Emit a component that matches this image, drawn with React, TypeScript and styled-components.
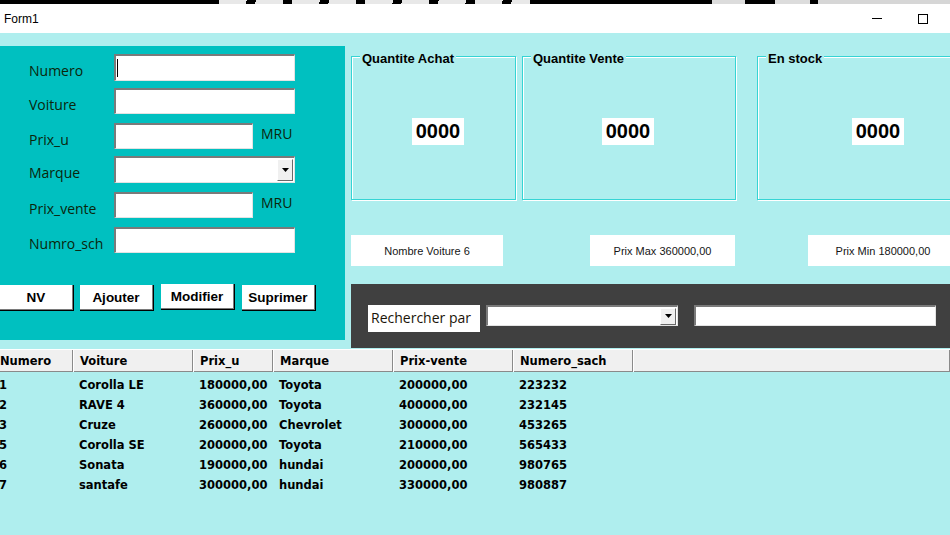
import React from "react";
import styled, { createGlobalStyle } from "styled-components";

const GlobalStyle = createGlobalStyle`
  html, body { margin: 0; padding: 0; background: #afeeee; overflow: hidden; }
  body { font-family: "Liberation Sans", Arial, sans-serif; }
  #root { width: 950px; height: 535px; overflow: hidden; }
`;

const Window = styled.div`
  width: 950px;
  height: 535px;
  display: flex;
  flex-direction: column;
  overflow: hidden;
  background: #afeeee;
`;

const DesktopStrip = styled.div`
  height: 4px;
  flex: none;
  background:
    linear-gradient(90deg, #000 0 215px, transparent 215px 530px, #000 530px 712px, #dcdcdc 712px 745px, #000 745px 775px, #dcdcdc 775px 810px, #000 810px 818px, #d6d6d6 818px),
    repeating-linear-gradient(100deg, #e8e8e8 0 27px, #000 27px 36px);
`;

const TitleBar = styled.div`
  height: 29px;
  flex: none;
  background: #fff;
  display: flex;
  align-items: center;
  padding: 0 4px;
  font-family: "Liberation Sans", Arial, sans-serif;
  font-size: 12px;
  color: #000;
`;

const Caption = styled.span`
  flex: 1;
`;

const CaptionButton = styled.div`
  width: 46px;
  height: 29px;
  display: flex;
  align-items: center;
  justify-content: center;
`;

const MinGlyph = styled.span`
  width: 10px;
  height: 1px;
  background: #000;
`;

const MaxGlyph = styled.span`
  width: 10px;
  height: 10px;
  box-sizing: border-box;
  border: 1px solid #000;
`;

const Client = styled.div`
  flex: 1;
  display: flex;
  flex-direction: column;
`;

const TopArea = styled.div`
  display: flex;
  align-items: flex-start;
  margin-top: 13px;
`;

const LeftPanel = styled.div`
  width: 345px;
  height: 294px;
  flex: none;
  box-sizing: border-box;
  background: #00c0c0;
  padding-top: 8px;
  display: flex;
  flex-direction: column;
`;

const FormRow = styled.div<{ $mt: number }>`
  display: flex;
  align-items: flex-start;
  height: 26px;
  margin-top: ${(p) => p.$mt}px;
`;

const FieldLabel = styled.div`
  width: 114px;
  flex: none;
  box-sizing: border-box;
  padding: 7px 0 0 29px;
  font-family: "Open Sans", "Noto Sans", sans-serif;
  font-size: 14px;
  line-height: 20px;
  color: #0b260b;
`;

const TextBox = styled.div<{ $w: number; $h?: number }>`
  width: ${(p) => p.$w}px;
  height: ${(p) => p.$h ?? 26}px;
  flex: none;
  box-sizing: border-box;
  background: #fff;
  border-style: solid;
  border-width: 2px 1px 1px 2px;
  border-color: #7a7a7a #e3e3e3 #e3e3e3 #7a7a7a;
  display: flex;
  align-items: center;
  justify-content: flex-end;
  position: relative;
`;

const Caret = styled.span`
  position: absolute;
  left: 1px;
  top: 3px;
  width: 1px;
  height: 18px;
  background: #000;
`;

const DropButton = styled.div<{ $h: number }>`
  width: 16px;
  height: ${(p) => p.$h}px;
  margin-right: 1px;
  box-sizing: border-box;
  background: #f0f0f0;
  border-style: solid;
  border-width: 1px;
  border-color: #fff #696969 #696969 #fff;
  display: flex;
  align-items: center;
  justify-content: center;
`;

const Unit = styled.div`
  margin-left: 8px;
  padding-top: 1px;
  font-family: "Open Sans", "Noto Sans", sans-serif;
  font-size: 14px;
  line-height: 20px;
  color: #0b260b;
`;

const ButtonRow = styled.div`
  display: flex;
  align-items: flex-start;
  margin-top: 31px;
`;

const ActionButton = styled.div<{ $ml: number; $up?: boolean }>`
  width: 74px;
  height: 26px;
  margin-left: ${(p) => p.$ml}px;
  margin-top: ${(p) => (p.$up ? 0 : 1)}px;
  box-sizing: border-box;
  background: #fff;
  box-shadow: inset -1px -1px 0 #000, inset -2px -2px 0 #7a7a7a;
  display: flex;
  align-items: center;
  justify-content: center;
  padding: 0 2px 1px 0;
  font-family: "Liberation Sans", Arial, sans-serif;
  font-weight: bold;
  font-size: 13.5px;
  color: #000;
`;

const RightColumn = styled.div`
  flex: 1;
  margin-left: 6px;
  padding-top: 10px;
  display: flex;
  flex-direction: column;
`;

const GroupRow = styled.div`
  display: flex;
  height: 144px;
`;

const GroupBox = styled.div<{ $w: number; $ml: number; $vx: number }>`
  position: relative;
  flex: none;
  width: ${(p) => p.$w}px;
  height: 144px;
  margin-left: ${(p) => p.$ml}px;
  box-sizing: border-box;
  border: 1px solid #35d4d4;
  box-shadow: 1px 1px 0 #ffffff, inset 1px 1px 0 #ffffff;
  padding: 61px 0 0 ${(p) => p.$vx}px;
`;

const GroupTitle = styled.div`
  position: absolute;
  top: -6px;
  left: 8px;
  padding: 0 2px;
  background: #afeeee;
  font-family: "Liberation Sans", Arial, sans-serif;
  font-weight: bold;
  font-size: 13px;
  line-height: 15px;
  color: #000;
`;

const ValueBox = styled.div`
  width: 52px;
  height: 27px;
  background: #fff;
  display: flex;
  align-items: center;
  justify-content: center;
  font-family: "Liberation Sans", Arial, sans-serif;
  font-weight: bold;
  font-size: 20px;
  color: #000;
`;

const InfoRow = styled.div`
  display: flex;
  height: 31px;
  margin-top: 35px;
`;

const InfoBox = styled.div<{ $w: number; $ml: number }>`
  flex: none;
  width: ${(p) => p.$w}px;
  margin-left: ${(p) => p.$ml}px;
  background: #fff;
  display: flex;
  align-items: center;
  justify-content: center;
  font-family: "Liberation Sans", Arial, sans-serif;
  font-size: 11px;
  color: #151515;
`;

const SearchPanel = styled.div`
  height: 64px;
  margin-top: 18px;
  box-sizing: border-box;
  background: #404040;
  display: flex;
  align-items: flex-start;
  padding: 21px 0 0 17px;
`;

const SearchLabel = styled.div`
  width: 112px;
  height: 27px;
  box-sizing: border-box;
  background: #fff;
  padding: 1px 0 0 3px;
  font-family: "Open Sans", "Noto Sans", sans-serif;
  font-size: 14px;
  line-height: 24px;
  color: #1a1408;
`;

const Spacer = styled.div<{ $w: number }>`
  width: ${(p) => p.$w}px;
  flex: none;
`;

const Grid = styled.div`
  margin: 1px 0 0 -7px;
  display: flex;
  flex-direction: column;
  font-family: "DejaVu Sans", Verdana, sans-serif;
  font-weight: bold;
  font-size: 11.5px;
  color: #000;
`;

const columns = "80px 120px 80px 120px 120px 120px 1fr";

const HeaderRow = styled.div`
  display: grid;
  grid-template-columns: ${columns};
  height: 23px;
  box-sizing: border-box;
  background: #f0f0f0;
  border-top: 1px solid #ffffff;
  border-bottom: 1px solid #8a8a8a;
`;

const HeaderCell = styled.div`
  box-sizing: border-box;
  padding: 1px 0 0 7px;
  line-height: 21px;
  border-right: 1px solid #8a8a8a;
  box-shadow: inset 1px 0 0 #ffffff;
  white-space: nowrap;
`;

const Body = styled.div`
  padding-top: 3px;
`;

const DataRow = styled.div`
  display: grid;
  grid-template-columns: ${columns};
  height: 20px;
  line-height: 20px;
`;

const DataCell = styled.div`
  padding-left: 6px;
  white-space: nowrap;
`;

const Arrow = () => (
  <svg width="7" height="4" viewBox="0 0 7 4">
    <polygon points="0,0 7,0 3.5,4" fill="#000" />
  </svg>
);

const rows = [
  ["1", "Corolla LE", "180000,00", "Toyota", "200000,00", "223232"],
  ["2", "RAVE 4", "360000,00", "Toyota", "400000,00", "232145"],
  ["3", "Cruze", "260000,00", "Chevrolet", "300000,00", "453265"],
  ["5", "Corolla SE", "200000,00", "Toyota", "210000,00", "565433"],
  ["6", "Sonata", "190000,00", "hundai", "200000,00", "980765"],
  ["7", "santafe", "300000,00", "hundai", "330000,00", "980887"],
];

const headers = ["Numero", "Voiture", "Prix_u", "Marque", "Prix-vente", "Numero_sach", ""];

export default function App() {
  return (
    <Window>
      <GlobalStyle />
      <DesktopStrip />
      <TitleBar>
        <Caption>Form1</Caption>
        <CaptionButton>
          <MinGlyph />
        </CaptionButton>
        <CaptionButton>
          <MaxGlyph />
        </CaptionButton>
      </TitleBar>
      <Client>
        <TopArea>
          <LeftPanel>
            <FormRow $mt={0}>
              <FieldLabel>Numero</FieldLabel>
              <TextBox $w={181} $h={27}>
                <Caret />
              </TextBox>
            </FormRow>
            <FormRow $mt={8}>
              <FieldLabel>Voiture</FieldLabel>
              <TextBox $w={181} />
            </FormRow>
            <FormRow $mt={9}>
              <FieldLabel>Prix_u</FieldLabel>
              <TextBox $w={139} />
              <Unit>MRU</Unit>
            </FormRow>
            <FormRow $mt={7}>
              <FieldLabel>Marque</FieldLabel>
              <TextBox $w={181} $h={27}>
                <DropButton $h={22}>
                  <Arrow />
                </DropButton>
              </TextBox>
            </FormRow>
            <FormRow $mt={10}>
              <FieldLabel>Prix_vente</FieldLabel>
              <TextBox $w={139} />
              <Unit>MRU</Unit>
            </FormRow>
            <FormRow $mt={9}>
              <FieldLabel>Numro_sch</FieldLabel>
              <TextBox $w={181} />
            </FormRow>
            <ButtonRow>
              <ActionButton $ml={0}>NV</ActionButton>
              <ActionButton $ml={6}>Ajouter</ActionButton>
              <ActionButton $ml={7} $up>
                Modifier
              </ActionButton>
              <ActionButton $ml={7}>Suprimer</ActionButton>
            </ButtonRow>
          </LeftPanel>
          <RightColumn>
            <GroupRow>
              <GroupBox $w={165} $ml={0} $vx={60}>
                <GroupTitle>Quantite Achat</GroupTitle>
                <ValueBox>0000</ValueBox>
              </GroupBox>
              <GroupBox $w={214} $ml={6} $vx={79}>
                <GroupTitle>Quantite Vente</GroupTitle>
                <ValueBox>0000</ValueBox>
              </GroupBox>
              <GroupBox $w={220} $ml={21} $vx={94}>
                <GroupTitle>En stock</GroupTitle>
                <ValueBox>0000</ValueBox>
              </GroupBox>
            </GroupRow>
            <InfoRow>
              <InfoBox $w={152} $ml={0}>Nombre Voiture 6</InfoBox>
              <InfoBox $w={145} $ml={87}>Prix Max 360000,00</InfoBox>
              <InfoBox $w={150} $ml={73}>Prix Min 180000,00</InfoBox>
            </InfoRow>
            <SearchPanel>
              <SearchLabel>Rechercher par</SearchLabel>
              <Spacer $w={6} />
              <TextBox $w={192} $h={21}>
                <DropButton $h={17}>
                  <Arrow />
                </DropButton>
              </TextBox>
              <Spacer $w={16} />
              <TextBox $w={242} $h={21} />
            </SearchPanel>
          </RightColumn>
        </TopArea>
        <Grid>
          <HeaderRow>
            {headers.map((h, i) => (
              <HeaderCell key={i}>{h}</HeaderCell>
            ))}
          </HeaderRow>
          <Body>
            {rows.map((r, i) => (
              <DataRow key={i}>
                {r.map((c, j) => (
                  <DataCell key={j}>{c}</DataCell>
                ))}
                <DataCell />
              </DataRow>
            ))}
          </Body>
        </Grid>
      </Client>
    </Window>
  );
}
